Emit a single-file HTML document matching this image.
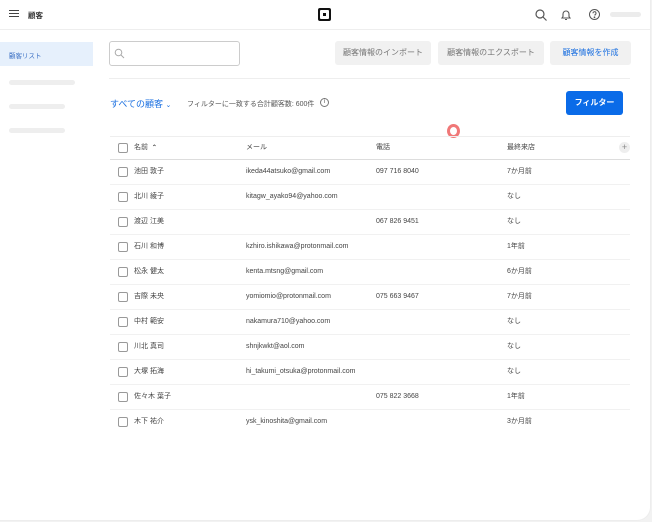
<!DOCTYPE html>
<html><head><meta charset="utf-8"><style>
*{box-sizing:border-box;margin:0;padding:0}
body{width:652px;height:522px;overflow:hidden;background:#f2f2f2;font-family:"Liberation Sans","Noto Sans CJK JP",sans-serif;color:#333;position:relative}
.page{position:absolute;left:0;top:0;width:651px;height:521px;background:#fff;border-radius:0 0 14px 0;border-right:1px solid #ededed;border-bottom:1px solid #ededed}
.a{position:absolute}
.top{position:absolute;left:0;top:0;width:650px;height:30px;border-bottom:1px solid #eee}
.t7{font-size:7px;white-space:nowrap}
.btn{position:absolute;top:41px;height:24px;background:#f1f1f1;border-radius:3px;font-size:8px;color:#777;line-height:24px;text-align:center}
.row{position:absolute;left:110px;width:520px;height:25px;border-bottom:1px solid #f1f1f1}
.cb{position:absolute;left:8px;top:7px;width:10px;height:10px;border:1px solid #999;border-radius:2px}
.row span{position:absolute;top:0;height:24px;line-height:24px;font-size:7px;color:#444;white-space:nowrap}
.bar{position:absolute;height:5px;background:#eee;border-radius:3px}
</style></head><body><div class="page">
<div class="top">
 <div class="a" style="left:9px;top:10px;width:10px;height:1.2px;background:#444;box-shadow:0 3px 0 #444,0 6px 0 #444"></div>
 <div class="a t7" style="left:28px;top:10px;font-weight:bold;font-size:7.5px;color:#333">顧客</div>
 <div class="a" style="left:318px;top:8px;width:13px;height:13px;background:#111;border-radius:2px"><div class="a" style="left:2px;top:2px;width:9px;height:9px;background:#fff;border-radius:1px"></div><div class="a" style="left:5px;top:5px;width:3px;height:3px;background:#111"></div></div>
 <svg class="a" style="left:534px;top:8px" width="14" height="14" viewBox="0 0 14 14" fill="none" stroke="#555" stroke-width="1.2"><circle cx="6" cy="6" r="4"/><path d="M9 9l3.5 3.5"/></svg>
 <svg class="a" style="left:559px;top:8px" width="14" height="14" viewBox="0 0 14 14" fill="none" stroke="#555" stroke-width="1.1"><path d="M3 10h8l-1-1.5V6a3 3 0 0 0-6 0v2.5z M6 11.5h2"/></svg>
 <svg class="a" style="left:588px;top:8px" width="13" height="13" viewBox="0 0 13 13" fill="none" stroke="#555" stroke-width="1"><circle cx="6.5" cy="6.5" r="5"/><path d="M5 5.2a1.5 1.5 0 1 1 2 1.4v1"/><circle cx="6.5" cy="9.3" r=".4" fill="#555"/></svg>
 <div class="a" style="left:610px;top:12px;width:31px;height:5px;background:#ececec;border-radius:3px"></div>
</div>
<div class="a" style="left:0;top:42px;width:93px;height:24px;background:#e6f0fc"></div>
<div class="a t7" style="left:9px;top:50px;color:#3a6fc4;font-size:6.5px">顧客リスト</div>
<div class="bar" style="left:9px;top:80px;width:66px"></div>
<div class="bar" style="left:9px;top:104px;width:56px"></div>
<div class="bar" style="left:9px;top:128px;width:56px"></div>
<div class="a" style="left:109px;top:41px;width:131px;height:25px;border:1px solid #ccc;border-radius:3px"></div>
<svg class="a" style="left:114px;top:48px" width="11" height="11" viewBox="0 0 11 11" fill="none" stroke="#aaa" stroke-width="1"><circle cx="4.5" cy="4.5" r="3.3"/><path d="M7 7l3 3"/></svg>
<div class="btn" style="left:335px;width:96px">顧客情報のインポート</div>
<div class="btn" style="left:438px;width:106px">顧客情報のエクスポート</div>
<div class="btn" style="left:550px;width:81px;color:#1a6fe0">顧客情報を作成</div>
<div class="a" style="left:109px;top:78px;width:521px;height:1px;background:#eee"></div>
<div class="a" style="left:110px;top:97px;font-size:9px;color:#1a6fe0;white-space:nowrap">すべての顧客 <span style="font-size:7px">⌄</span></div>
<div class="a t7" style="left:187px;top:99px;color:#555">フィルターに一致する合計顧客数: 600件</div>
<div class="a" style="left:320px;top:98px;width:9px;height:9px;border:1px solid #777;border-radius:50%;font-size:6px;text-align:center;line-height:7px;color:#555">i</div>
<div class="a" style="left:566px;top:91px;width:57px;height:24px;background:#0a6be8;border-radius:3px;color:#fff;font-size:8px;font-weight:bold;text-align:center;line-height:24px">フィルター</div>
<div class="a" style="left:447px;top:124px;width:13px;height:14px;border:3px solid #f07878;border-radius:50%"></div>
<div class="a" style="left:110px;top:136px;width:520px;height:1px;background:#eee"></div>
<div class="row" style="top:136px;height:24px;border-bottom:1px solid #ddd"><div class="cb" style="top:7px"></div>
<span style="left:24px">名前 &nbsp;<b style="font-size:6px">⌃</b></span><span style="left:136px">メール</span><span style="left:266px">電話</span><span style="left:397px">最終来店</span>
<div class="a" style="left:509px;top:6px;width:11px;height:11px;border-radius:50%;background:#eee;font-size:9px;line-height:10px;text-align:center;color:#888">+</div></div>
<div class="row" style="top:160px"><div class="cb"></div><span style="left:24px">池田 敦子</span><span style="left:136px">ikeda44atsuko@gmail.com</span><span style="left:266px">097 716 8040</span><span style="left:397px">7か月前</span></div>
<div class="row" style="top:185px"><div class="cb"></div><span style="left:24px">北川 綾子</span><span style="left:136px">kitagw_ayako94@yahoo.com</span><span style="left:397px">なし</span></div>
<div class="row" style="top:210px"><div class="cb"></div><span style="left:24px">渡辺 江美</span><span style="left:266px">067 826 9451</span><span style="left:397px">なし</span></div>
<div class="row" style="top:235px"><div class="cb"></div><span style="left:24px">石川 和博</span><span style="left:136px">kzhiro.ishikawa@protonmail.com</span><span style="left:397px">1年前</span></div>
<div class="row" style="top:260px"><div class="cb"></div><span style="left:24px">松永 健太</span><span style="left:136px">kenta.mtsng@gmail.com</span><span style="left:397px">6か月前</span></div>
<div class="row" style="top:285px"><div class="cb"></div><span style="left:24px">吉際 未央</span><span style="left:136px">yomiomio@protonmail.com</span><span style="left:266px">075 663 9467</span><span style="left:397px">7か月前</span></div>
<div class="row" style="top:310px"><div class="cb"></div><span style="left:24px">中村 範安</span><span style="left:136px">nakamura710@yahoo.com</span><span style="left:397px">なし</span></div>
<div class="row" style="top:335px"><div class="cb"></div><span style="left:24px">川北 真司</span><span style="left:136px">shnjkwkt@aol.com</span><span style="left:397px">なし</span></div>
<div class="row" style="top:360px"><div class="cb"></div><span style="left:24px">大塚 拓海</span><span style="left:136px">hi_takumi_otsuka@protonmail.com</span><span style="left:397px">なし</span></div>
<div class="row" style="top:385px"><div class="cb"></div><span style="left:24px">佐々木 葉子</span><span style="left:266px">075 822 3668</span><span style="left:397px">1年前</span></div>
<div class="row" style="top:410px;border-bottom:none"><div class="cb"></div><span style="left:24px">木下 祐介</span><span style="left:136px">ysk_kinoshita@gmail.com</span><span style="left:397px">3か月前</span></div>
</div></body></html>
